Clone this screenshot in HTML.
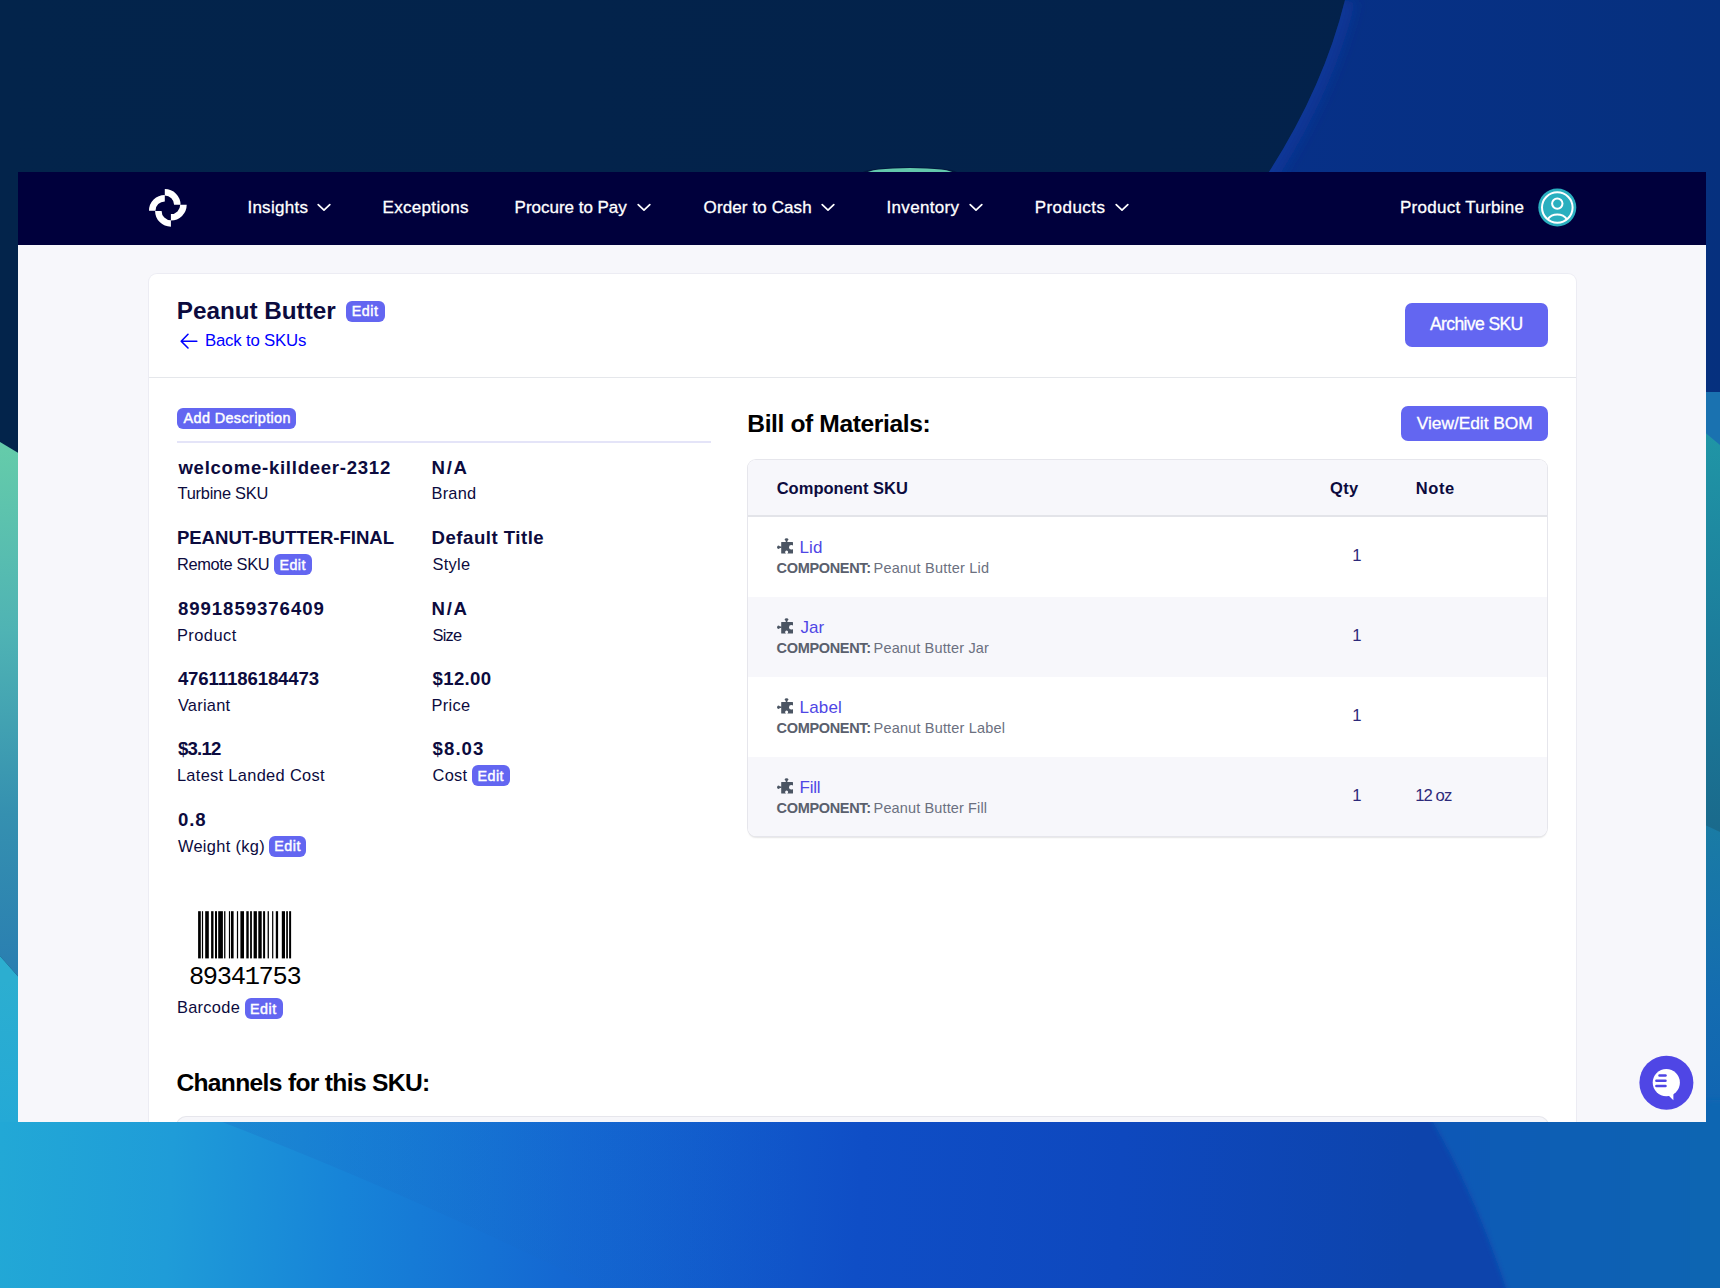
<!DOCTYPE html>
<html><head><meta charset="utf-8"><style>
html,body{margin:0;padding:0;}
body{width:1720px;height:1288px;overflow:hidden;position:relative;font-family:"Liberation Sans",sans-serif;}
.b{position:absolute;}
.t{position:absolute;white-space:nowrap;}
#win{position:absolute;left:18px;top:172px;width:1688px;height:950px;overflow:hidden;background:#F7F7FB;}
</style></head><body>
<svg style="position:absolute;left:0;top:0" width="1720" height="1288" viewBox="0 0 1720 1288">
<defs>
<linearGradient id="gNavy" x1="0" y1="0" x2="1" y2="0"><stop offset="0" stop-color="#03244B"/><stop offset="1" stop-color="#03214B"/></linearGradient>
<linearGradient id="gBlueTop" x1="0" y1="0" x2="1" y2="0"><stop offset="0" stop-color="#07308A"/><stop offset="1" stop-color="#06307E"/></linearGradient>
<linearGradient id="gTeal" gradientUnits="userSpaceOnUse" x1="0" y1="450" x2="0" y2="970"><stop offset="0" stop-color="#64CBAA"/><stop offset="0.35" stop-color="#4FB3B4"/><stop offset="0.7" stop-color="#3590B0"/><stop offset="1" stop-color="#2A7FB1"/></linearGradient>
<linearGradient id="gBottom" gradientUnits="userSpaceOnUse" x1="0" y1="1150" x2="1720" y2="1250"><stop offset="0" stop-color="#22A8D6"/><stop offset="0.1" stop-color="#1F9CD8"/><stop offset="0.2" stop-color="#1784D8"/><stop offset="0.33" stop-color="#1468D2"/><stop offset="0.5" stop-color="#0F4EC6"/><stop offset="0.65" stop-color="#0E48BE"/><stop offset="0.82" stop-color="#0D44AC"/><stop offset="1" stop-color="#0D44AC"/></linearGradient>
<linearGradient id="gBR" gradientUnits="userSpaceOnUse" x1="1440" y1="0" x2="1720" y2="0"><stop offset="0" stop-color="#0E58B6"/><stop offset="1" stop-color="#1066B2"/></linearGradient>
<linearGradient id="gRT" gradientUnits="userSpaceOnUse" x1="0" y1="430" x2="0" y2="830"><stop offset="0" stop-color="#2096A6"/><stop offset="0.5" stop-color="#1C7E9C"/><stop offset="1" stop-color="#1A6A8C"/></linearGradient>
<linearGradient id="gWedge" gradientUnits="userSpaceOnUse" x1="222" y1="0" x2="800" y2="0"><stop offset="0" stop-color="#1A6CC4" stop-opacity="0.3"/><stop offset="1" stop-color="#1466C8" stop-opacity="0"/></linearGradient>
<linearGradient id="gCyan" gradientUnits="userSpaceOnUse" x1="0" y1="980" x2="0" y2="1122"><stop offset="0" stop-color="#2CAED0"/><stop offset="1" stop-color="#24A9D6"/></linearGradient>
<filter id="blur2" x="-10%" y="-10%" width="120%" height="120%"><feGaussianBlur stdDeviation="2.5"/></filter>
<filter id="blur8" x="-50%" y="-10%" width="200%" height="120%"><feGaussianBlur stdDeviation="6"/></filter>
<linearGradient id="gRB" gradientUnits="userSpaceOnUse" x1="0" y1="820" x2="0" y2="1122"><stop offset="0" stop-color="#1A7CA4"/><stop offset="0.6" stop-color="#146CB0"/><stop offset="1" stop-color="#1064B2"/></linearGradient>
</defs>
<rect width="1720" height="1288" fill="url(#gNavy)"/>
<path d="M1345 0 L1720 0 L1720 392 L1172 392 L1269 172 Q1324 86 1345 0 Z" fill="url(#gBlueTop)"/>
<clipPath id="cpBlue"><path d="M1345 0 L1720 0 L1720 392 L1172 392 L1269 172 Q1324 86 1345 0 Z"/></clipPath><path d="M1172 392 L1269 172 Q1324 86 1345 0" fill="none" stroke="#0D3CA2" stroke-width="22" stroke-opacity="0.55" filter="url(#blur8)" clip-path="url(#cpBlue)"/>
<rect x="1690" y="392" width="30" height="60" fill="#1A72B0"/>
<path d="M1690 420 L1720 445 L1720 900 L1690 900 Z" fill="url(#gRT)"/>
<path d="M1690 818 L1720 832 L1720 1130 L1690 1130 Z" fill="url(#gRB)"/>
<path d="M0 442 L30 460 L30 990 L0 956 Z" fill="url(#gTeal)"/>
<path d="M0 956 L30 990 L30 1130 L0 1130 Z" fill="url(#gCyan)"/>
<rect x="0" y="1122" width="1720" height="166" fill="url(#gBottom)"/>
<path d="M222 1122 L800 1122 L800 1288 L600 1288 Q400 1190 222 1122 Z" fill="url(#gWedge)"/>
<path d="M1420 1100 L1740 1100 L1740 1300 L1510 1300 Q1478 1200 1433 1122 Z" fill="url(#gBR)" filter="url(#blur2)"/>
<ellipse cx="910" cy="174" rx="49" ry="7" fill="#02183C"/><ellipse cx="910" cy="173.5" rx="44" ry="5.5" fill="#62C8AC"/>
</svg>

<div id="win">
<div class="b" style="left:0.00px;top:0.00px;width:1688.00px;height:73.00px;background:#00003C;"></div>
<svg class="b" style="left:127px;top:13px" width="46" height="46" viewBox="0 0 46 46"><g fill="#fff">
<path d="M19.8 4 A15.8 15.8 0 0 1 35.6 19.8 L29.1 19.8 A9.3 9.3 0 0 0 19.8 10.5 Z"/>
<path d="M4 25.7 A15.8 15.8 0 0 1 19.8 9.9 L19.8 16.4 A9.3 9.3 0 0 0 10.5 25.7 Z"/>
<path d="M25.9 41.7 A15.8 15.8 0 0 1 10.1 25.9 L16.6 25.9 A9.3 9.3 0 0 0 25.9 35.2 Z"/>
<path d="M41.7 19.8 A15.8 15.8 0 0 1 25.9 35.6 L25.9 29.1 A9.3 9.3 0 0 0 35.2 19.8 Z"/>
</g></svg>
<svg class="b" style="left:299px;top:31px" width="14" height="9" viewBox="0 0 14 9"><path d="M1.2 1.6 L7 7.2 L12.8 1.6" fill="none" stroke="#fff" stroke-width="1.7" stroke-linecap="round" stroke-linejoin="round"/></svg><svg class="b" style="left:619px;top:31px" width="14" height="9" viewBox="0 0 14 9"><path d="M1.2 1.6 L7 7.2 L12.8 1.6" fill="none" stroke="#fff" stroke-width="1.7" stroke-linecap="round" stroke-linejoin="round"/></svg><svg class="b" style="left:803px;top:31px" width="14" height="9" viewBox="0 0 14 9"><path d="M1.2 1.6 L7 7.2 L12.8 1.6" fill="none" stroke="#fff" stroke-width="1.7" stroke-linecap="round" stroke-linejoin="round"/></svg><svg class="b" style="left:951px;top:31px" width="14" height="9" viewBox="0 0 14 9"><path d="M1.2 1.6 L7 7.2 L12.8 1.6" fill="none" stroke="#fff" stroke-width="1.7" stroke-linecap="round" stroke-linejoin="round"/></svg><svg class="b" style="left:1097px;top:31px" width="14" height="9" viewBox="0 0 14 9"><path d="M1.2 1.6 L7 7.2 L12.8 1.6" fill="none" stroke="#fff" stroke-width="1.7" stroke-linecap="round" stroke-linejoin="round"/></svg>
<svg class="b" style="left:1520px;top:16px" width="39" height="39" viewBox="0 0 39 39">
<circle cx="19.3" cy="19.5" r="19" fill="#2AAFBF"/>
<circle cx="19.3" cy="19.5" r="15.3" fill="none" stroke="#fff" stroke-width="2"/>
<circle cx="19.3" cy="15.6" r="5.2" fill="none" stroke="#fff" stroke-width="2"/>
<path d="M9.6 31.3 C12 28 15.5 26.6 19.3 26.6 C23.1 26.6 26.6 28 29 31.3" fill="none" stroke="#fff" stroke-width="2"/>
</svg>
<div class="b" style="left:131.00px;top:102.00px;width:1427.00px;height:1026.00px;background:#fff;border-radius:8px;box-shadow:0 0 0 1px #ECECF3;"></div>
<div class="b" style="left:131.00px;top:205.00px;width:1427.00px;height:1.00px;background:#E5E7EB;"></div>
<div class="b" style="left:328.25px;top:128.60px;width:38.25px;height:21.00px;background:#6366F1;border-radius:6px;"></div>
<svg class="b" style="left:161px;top:160.39999999999998px" width="20" height="18" viewBox="0 0 20 18"><path d="M9 2.3 L2.2 9.2 L9 16 M2.6 9.2 H17.8" fill="none" stroke="#0000FF" stroke-width="1.6" stroke-linecap="round" stroke-linejoin="round"/></svg>
<div class="b" style="left:1387.00px;top:131.00px;width:143.00px;height:44.20px;background:#6366F1;border-radius:7px;"></div>
<div class="b" style="left:159.00px;top:236.00px;width:119.40px;height:21.00px;background:#6366F1;border-radius:6px;"></div>
<div class="b" style="left:159.00px;top:268.60px;width:534.00px;height:2.00px;background:#E4E4F8;"></div>
<div class="b" style="left:256.00px;top:382.40px;width:37.90px;height:20.90px;background:#6366F1;border-radius:6px;"></div>
<div class="b" style="left:454.00px;top:593.30px;width:38.00px;height:21.00px;background:#6366F1;border-radius:6px;"></div>
<div class="b" style="left:251.30px;top:663.80px;width:37.20px;height:20.90px;background:#6366F1;border-radius:6px;"></div>
<div class="b" style="left:226.60px;top:826.30px;width:38.10px;height:20.40px;background:#6366F1;border-radius:6px;"></div>
<svg class="b" style="left:172px;top:733px" width="110" height="60" viewBox="190 905 110 60"><rect x="198.1" y="911.2" width="2.7" height="47.2" fill="#000"/><rect x="201.9" y="911.2" width="1.2" height="47.2" fill="#000"/><rect x="205.2" y="911.2" width="3.6" height="47.2" fill="#000"/><rect x="211.1" y="911.2" width="2.4" height="47.2" fill="#000"/><rect x="215.0" y="911.2" width="2.0" height="47.2" fill="#000"/><rect x="218.2" y="911.2" width="4.7" height="47.2" fill="#000"/><rect x="224.1" y="911.2" width="1.3" height="47.2" fill="#000"/><rect x="228.9" y="911.2" width="1.2" height="47.2" fill="#000"/><rect x="231.0" y="911.2" width="2.6" height="47.2" fill="#000"/><rect x="236.9" y="911.2" width="1.2" height="47.2" fill="#000"/><rect x="240.4" y="911.2" width="3.6" height="47.2" fill="#000"/><rect x="246.3" y="911.2" width="2.4" height="47.2" fill="#000"/><rect x="250.1" y="911.2" width="1.8" height="47.2" fill="#000"/><rect x="253.6" y="911.2" width="3.3" height="47.2" fill="#000"/><rect x="258.3" y="911.2" width="3.4" height="47.2" fill="#000"/><rect x="263.1" y="911.2" width="2.0" height="47.2" fill="#000"/><rect x="267.6" y="911.2" width="1.3" height="47.2" fill="#000"/><rect x="272.1" y="911.2" width="1.2" height="47.2" fill="#000"/><rect x="275.8" y="911.2" width="2.3" height="47.2" fill="#000"/><rect x="281.8" y="911.2" width="3.2" height="47.2" fill="#000"/><rect x="286.2" y="911.2" width="1.7" height="47.2" fill="#000"/><rect x="289.1" y="911.2" width="2.0" height="47.2" fill="#000"/></svg>
<div class="b" style="left:1382.70px;top:234.00px;width:147.30px;height:35.00px;background:#6366F1;border-radius:7px;"></div>
<div class="b" style="left:730.4px;top:288.3px;width:799px;height:375.5px;border-radius:8px;overflow:hidden;box-shadow:0 0 0 1px #E6E6EC, 0 1.5px 1.5px rgba(0,0,0,0.10);background:#fff;">
  <div class="b" style="left:0;top:0;width:799px;height:54.7px;background:#F7F7FB;border-bottom:2px solid #E3E4E9;"></div>
  <div class="b" style="left:0;top:136.4px;width:799px;height:80px;background:#F7F7FB;"></div>
  <div class="b" style="left:0;top:296.4px;width:799px;height:80px;background:#F7F7FB;"></div>
</div>
<svg class="b" style="left:759px;top:366px" width="16" height="16" viewBox="0 0 16 16"><mask id="pzm1"><rect x="-1" y="-1" width="18" height="18" fill="#fff"/><circle cx="14.3" cy="9.3" r="2.3" fill="#000"/><rect x="14.6" y="8.3" width="3" height="2" fill="#000"/><circle cx="9.6" cy="14.0" r="1.5" fill="#000"/><rect x="8.9" y="14.3" width="1.4" height="3" fill="#000"/></mask><g fill="#4B5563" mask="url(#pzm1)"><rect x="4.2" y="3.9" width="11.8" height="11.6" rx="0.5"/><ellipse cx="9.55" cy="1.55" rx="1.8" ry="1.4"/><rect x="8.75" y="2" width="1.6" height="2.5"/><ellipse cx="1.5" cy="9.2" rx="1.4" ry="1.8"/><rect x="2" y="8.4" width="2.5" height="1.6"/></g></svg><svg class="b" style="left:759px;top:446px" width="16" height="16" viewBox="0 0 16 16"><mask id="pzm2"><rect x="-1" y="-1" width="18" height="18" fill="#fff"/><circle cx="14.3" cy="9.3" r="2.3" fill="#000"/><rect x="14.6" y="8.3" width="3" height="2" fill="#000"/><circle cx="9.6" cy="14.0" r="1.5" fill="#000"/><rect x="8.9" y="14.3" width="1.4" height="3" fill="#000"/></mask><g fill="#4B5563" mask="url(#pzm2)"><rect x="4.2" y="3.9" width="11.8" height="11.6" rx="0.5"/><ellipse cx="9.55" cy="1.55" rx="1.8" ry="1.4"/><rect x="8.75" y="2" width="1.6" height="2.5"/><ellipse cx="1.5" cy="9.2" rx="1.4" ry="1.8"/><rect x="2" y="8.4" width="2.5" height="1.6"/></g></svg><svg class="b" style="left:759px;top:526px" width="16" height="16" viewBox="0 0 16 16"><mask id="pzm3"><rect x="-1" y="-1" width="18" height="18" fill="#fff"/><circle cx="14.3" cy="9.3" r="2.3" fill="#000"/><rect x="14.6" y="8.3" width="3" height="2" fill="#000"/><circle cx="9.6" cy="14.0" r="1.5" fill="#000"/><rect x="8.9" y="14.3" width="1.4" height="3" fill="#000"/></mask><g fill="#4B5563" mask="url(#pzm3)"><rect x="4.2" y="3.9" width="11.8" height="11.6" rx="0.5"/><ellipse cx="9.55" cy="1.55" rx="1.8" ry="1.4"/><rect x="8.75" y="2" width="1.6" height="2.5"/><ellipse cx="1.5" cy="9.2" rx="1.4" ry="1.8"/><rect x="2" y="8.4" width="2.5" height="1.6"/></g></svg><svg class="b" style="left:759px;top:606px" width="16" height="16" viewBox="0 0 16 16"><mask id="pzm4"><rect x="-1" y="-1" width="18" height="18" fill="#fff"/><circle cx="14.3" cy="9.3" r="2.3" fill="#000"/><rect x="14.6" y="8.3" width="3" height="2" fill="#000"/><circle cx="9.6" cy="14.0" r="1.5" fill="#000"/><rect x="8.9" y="14.3" width="1.4" height="3" fill="#000"/></mask><g fill="#4B5563" mask="url(#pzm4)"><rect x="4.2" y="3.9" width="11.8" height="11.6" rx="0.5"/><ellipse cx="9.55" cy="1.55" rx="1.8" ry="1.4"/><rect x="8.75" y="2" width="1.6" height="2.5"/><ellipse cx="1.5" cy="9.2" rx="1.4" ry="1.8"/><rect x="2" y="8.4" width="2.5" height="1.6"/></g></svg>
<div class="b" style="left:159px;top:945px;width:1371px;height:40px;border-radius:9px;box-shadow:0 0 0 1px #E6E6EC;background:#F6F6FA;"></div>
<div class="t" style="left:229.40px;top:27.21px;font:400 17px/17px 'Liberation Sans';color:#FFFFFF;letter-spacing:0.273px;-webkit-text-stroke:0.3px currentColor;">Insights</div>
<div class="t" style="left:364.60px;top:27.21px;font:400 17px/17px 'Liberation Sans';color:#FFFFFF;letter-spacing:0.305px;-webkit-text-stroke:0.3px currentColor;">Exceptions</div>
<div class="t" style="left:496.60px;top:27.21px;font:400 17px/17px 'Liberation Sans';color:#FFFFFF;letter-spacing:-0.019px;-webkit-text-stroke:0.3px currentColor;">Procure to Pay</div>
<div class="t" style="left:685.60px;top:27.21px;font:400 17px/17px 'Liberation Sans';color:#FFFFFF;letter-spacing:0.107px;-webkit-text-stroke:0.3px currentColor;">Order to Cash</div>
<div class="t" style="left:868.50px;top:27.21px;font:400 17px/17px 'Liberation Sans';color:#FFFFFF;letter-spacing:0.322px;-webkit-text-stroke:0.3px currentColor;">Inventory</div>
<div class="t" style="left:1016.70px;top:27.21px;font:400 17px/17px 'Liberation Sans';color:#FFFFFF;letter-spacing:0.445px;-webkit-text-stroke:0.3px currentColor;">Products</div>
<div class="t" style="left:1382.00px;top:27.11px;font:400 17px/17px 'Liberation Sans';color:#FFFFFF;letter-spacing:0.274px;-webkit-text-stroke:0.3px currentColor;">Product Turbine</div>
<div class="t" style="left:158.80px;top:126.83px;font:700 24.3px/24.3px 'Liberation Sans';color:#0C0B3E;letter-spacing:-0.037px;">Peanut Butter</div>
<div class="t" style="left:333.80px;top:131.79px;font:400 14.3px/14.3px 'Liberation Sans';color:#FFFFFF;letter-spacing:0.479px;-webkit-text-stroke:0.45px currentColor;">Edit</div>
<div class="t" style="left:186.90px;top:161.38px;font:400 16.8px/16.8px 'Liberation Sans';color:#0000FF;letter-spacing:-0.185px;">Back to SKUs</div>
<div class="t" style="left:1412.00px;top:143.80px;font:400 17.6px/17.6px 'Liberation Sans';color:#FFFFFF;letter-spacing:-0.642px;-webkit-text-stroke:0.3px currentColor;">Archive SKU</div>
<div class="t" style="left:165.50px;top:238.71px;font:400 14.4px/14.4px 'Liberation Sans';color:#FFFFFF;letter-spacing:0.387px;-webkit-text-stroke:0.45px currentColor;">Add Description</div>
<div class="t" style="left:160.40px;top:286.95px;font:700 18.6px/18.6px 'Liberation Sans';color:#0C0B3E;letter-spacing:0.722px;">welcome-killdeer-2312</div>
<div class="t" style="left:413.50px;top:286.95px;font:700 18.6px/18.6px 'Liberation Sans';color:#0C0B3E;letter-spacing:1.703px;">N/A</div>
<div class="t" style="left:159.60px;top:313.01px;font:400 16.4px/16.4px 'Liberation Sans';color:#0C0B3E;letter-spacing:-0.258px;">Turbine SKU</div>
<div class="t" style="left:413.50px;top:313.01px;font:400 16.4px/16.4px 'Liberation Sans';color:#0C0B3E;letter-spacing:0.219px;">Brand</div>
<div class="t" style="left:158.90px;top:357.15px;font:700 18.6px/18.6px 'Liberation Sans';color:#0C0B3E;letter-spacing:-0.043px;">PEANUT-BUTTER-FINAL</div>
<div class="t" style="left:413.60px;top:357.15px;font:700 18.6px/18.6px 'Liberation Sans';color:#0C0B3E;letter-spacing:0.498px;">Default Title</div>
<div class="t" style="left:158.90px;top:383.51px;font:400 16.4px/16.4px 'Liberation Sans';color:#0C0B3E;letter-spacing:-0.323px;">Remote SKU</div>
<div class="t" style="left:414.60px;top:383.51px;font:400 16.4px/16.4px 'Liberation Sans';color:#0C0B3E;letter-spacing:0.269px;">Style</div>
<div class="t" style="left:159.90px;top:427.55px;font:700 18.6px/18.6px 'Liberation Sans';color:#0C0B3E;letter-spacing:0.959px;">8991859376409</div>
<div class="t" style="left:413.60px;top:427.55px;font:700 18.6px/18.6px 'Liberation Sans';color:#0C0B3E;letter-spacing:1.653px;">N/A</div>
<div class="t" style="left:158.90px;top:454.61px;font:400 16.4px/16.4px 'Liberation Sans';color:#0C0B3E;letter-spacing:0.478px;">Product</div>
<div class="t" style="left:414.60px;top:454.61px;font:400 16.4px/16.4px 'Liberation Sans';color:#0C0B3E;letter-spacing:-0.823px;">Size</div>
<div class="t" style="left:159.90px;top:497.85px;font:700 18.6px/18.6px 'Liberation Sans';color:#0C0B3E;letter-spacing:-0.114px;">47611186184473</div>
<div class="t" style="left:414.60px;top:497.85px;font:700 18.6px/18.6px 'Liberation Sans';color:#0C0B3E;letter-spacing:0.314px;">$12.00</div>
<div class="t" style="left:159.90px;top:524.81px;font:400 16.4px/16.4px 'Liberation Sans';color:#0C0B3E;letter-spacing:0.240px;">Variant</div>
<div class="t" style="left:413.60px;top:524.81px;font:400 16.4px/16.4px 'Liberation Sans';color:#0C0B3E;letter-spacing:0.293px;">Price</div>
<div class="t" style="left:159.90px;top:568.25px;font:700 18.6px/18.6px 'Liberation Sans';color:#0C0B3E;letter-spacing:-0.772px;">$3.12</div>
<div class="t" style="left:414.60px;top:568.25px;font:700 18.6px/18.6px 'Liberation Sans';color:#0C0B3E;letter-spacing:1.053px;">$8.03</div>
<div class="t" style="left:158.90px;top:595.31px;font:400 16.4px/16.4px 'Liberation Sans';color:#0C0B3E;letter-spacing:0.324px;">Latest Landed Cost</div>
<div class="t" style="left:414.60px;top:595.31px;font:400 16.4px/16.4px 'Liberation Sans';color:#0C0B3E;letter-spacing:0.217px;">Cost</div>
<div class="t" style="left:159.90px;top:638.75px;font:700 18.6px/18.6px 'Liberation Sans';color:#0C0B3E;letter-spacing:0.947px;">0.8</div>
<div class="t" style="left:159.90px;top:665.71px;font:400 16.4px/16.4px 'Liberation Sans';color:#0C0B3E;letter-spacing:0.326px;">Weight (kg)</div>
<div class="t" style="left:170.90px;top:792.99px;font:400 25.4px/25.4px 'Liberation Mono';color:#000000;letter-spacing:-1.294px;">89341753</div>
<div class="t" style="left:158.90px;top:826.51px;font:400 16.4px/16.4px 'Liberation Sans';color:#0C0B3E;letter-spacing:0.311px;">Barcode</div>
<div class="t" style="left:158.40px;top:899.27px;font:700 24.6px/24.6px 'Liberation Sans';color:#000000;letter-spacing:-0.668px;">Channels for this SKU:</div>
<div class="t" style="left:729.30px;top:240.17px;font:700 24.6px/24.6px 'Liberation Sans';color:#000000;letter-spacing:-0.386px;">Bill of Materials:</div>
<div class="t" style="left:1398.80px;top:242.97px;font:400 17.4px/17.4px 'Liberation Sans';color:#FFFFFF;letter-spacing:-0.061px;-webkit-text-stroke:0.3px currentColor;">View/Edit BOM</div>
<div class="t" style="left:758.70px;top:307.63px;font:700 16.5px/16.5px 'Liberation Sans';color:#0C0B3E;letter-spacing:0.012px;">Component SKU</div>
<div class="t" style="left:1312.00px;top:307.63px;font:700 16.5px/16.5px 'Liberation Sans';color:#0C0B3E;letter-spacing:0.336px;">Qty</div>
<div class="t" style="left:1397.80px;top:307.63px;font:700 16.5px/16.5px 'Liberation Sans';color:#0C0B3E;letter-spacing:0.570px;">Note</div>
<div class="t" style="left:781.50px;top:366.61px;font:400 17px/17px 'Liberation Sans';color:#4F46E5;letter-spacing:0.134px;">Lid</div>
<div class="t" style="left:758.60px;top:389.42px;font:700 14.5px/14.5px 'Liberation Sans';color:#5A606D;letter-spacing:-0.338px;">COMPONENT:</div>
<div class="t" style="left:855.60px;top:389.42px;font:400 14.5px/14.5px 'Liberation Sans';color:#6B7080;letter-spacing:0.213px;">Peanut Butter Lid</div>
<div class="t" style="left:1334.30px;top:375.76px;font:400 16.7px/16.7px 'Liberation Sans';color:#2E2A7A;">1</div>
<div class="t" style="left:782.50px;top:446.61px;font:400 17px/17px 'Liberation Sans';color:#4F46E5;">Jar</div>
<div class="t" style="left:758.60px;top:469.42px;font:700 14.5px/14.5px 'Liberation Sans';color:#5A606D;letter-spacing:-0.338px;">COMPONENT:</div>
<div class="t" style="left:855.60px;top:469.42px;font:400 14.5px/14.5px 'Liberation Sans';color:#6B7080;letter-spacing:0.149px;">Peanut Butter Jar</div>
<div class="t" style="left:1334.30px;top:455.76px;font:400 16.7px/16.7px 'Liberation Sans';color:#2E2A7A;">1</div>
<div class="t" style="left:781.50px;top:526.61px;font:400 17px/17px 'Liberation Sans';color:#4F46E5;letter-spacing:0.195px;">Label</div>
<div class="t" style="left:758.60px;top:549.42px;font:700 14.5px/14.5px 'Liberation Sans';color:#5A606D;letter-spacing:-0.338px;">COMPONENT:</div>
<div class="t" style="left:855.60px;top:549.42px;font:400 14.5px/14.5px 'Liberation Sans';color:#6B7080;letter-spacing:0.175px;">Peanut Butter Label</div>
<div class="t" style="left:1334.30px;top:535.76px;font:400 16.7px/16.7px 'Liberation Sans';color:#2E2A7A;">1</div>
<div class="t" style="left:781.50px;top:606.61px;font:400 17px/17px 'Liberation Sans';color:#4F46E5;letter-spacing:-0.213px;">Fill</div>
<div class="t" style="left:758.60px;top:629.42px;font:700 14.5px/14.5px 'Liberation Sans';color:#5A606D;letter-spacing:-0.338px;">COMPONENT:</div>
<div class="t" style="left:855.60px;top:629.42px;font:400 14.5px/14.5px 'Liberation Sans';color:#6B7080;letter-spacing:0.129px;">Peanut Butter Fill</div>
<div class="t" style="left:1334.30px;top:615.76px;font:400 16.7px/16.7px 'Liberation Sans';color:#2E2A7A;">1</div>
<div class="t" style="left:1397.30px;top:615.76px;font:400 16.7px/16.7px 'Liberation Sans';color:#2E2A7A;letter-spacing:-0.970px;">12 oz</div>
<div class="t" style="left:261.40px;top:385.69px;font:400 14.3px/14.3px 'Liberation Sans';color:#FFFFFF;letter-spacing:0.479px;-webkit-text-stroke:0.45px currentColor;">Edit</div>
<div class="t" style="left:459.45px;top:596.59px;font:400 14.3px/14.3px 'Liberation Sans';color:#FFFFFF;letter-spacing:0.479px;-webkit-text-stroke:0.45px currentColor;">Edit</div>
<div class="t" style="left:256.35px;top:667.09px;font:400 14.3px/14.3px 'Liberation Sans';color:#FFFFFF;letter-spacing:0.479px;-webkit-text-stroke:0.45px currentColor;">Edit</div>
<div class="t" style="left:232.10px;top:829.59px;font:400 14.3px/14.3px 'Liberation Sans';color:#FFFFFF;letter-spacing:0.479px;-webkit-text-stroke:0.45px currentColor;">Edit</div>
<svg class="b" style="left:1618px;top:880px" width="62" height="62" viewBox="1636 1052 62 62">
<circle cx="1666.4" cy="1082.7" r="27" fill="#4F46E5"/>
<circle cx="1666.3" cy="1082.6" r="13.6" fill="#fff"/>
<path d="M1667 1094 L1673.4 1100.3 L1673.4 1093" fill="#fff"/>
<g stroke="#4F46E5" stroke-width="2.5" stroke-linecap="round"><line x1="1659.5" y1="1075.5" x2="1665.5" y2="1075.5"/><line x1="1656.4" y1="1080.8" x2="1665.5" y2="1080.8"/><line x1="1656.4" y1="1086" x2="1665.5" y2="1086"/></g>
</svg>
</div>
</body></html>
